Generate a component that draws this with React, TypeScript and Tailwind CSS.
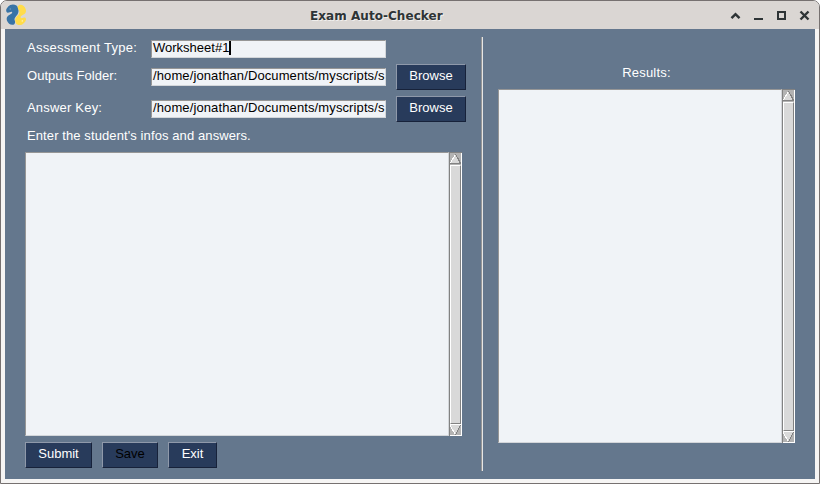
import React from "react";

const FONT = "font-['Liberation_Sans',Arial,sans-serif]";

function Label({ children, className = "" }: { children: React.ReactNode; className?: string }) {
  return <span className={`block whitespace-pre text-[13px] leading-[16px] text-white ${className}`}>{children}</span>;
}

function Field({ children, className = "" }: { children: React.ReactNode; className?: string }) {
  return (
    <div className={`flex h-[18px] w-[235px] shrink-0 overflow-hidden border border-b-[#d3d6da] border-l-[#969696] border-r-[#d3d6da] border-t-[#969696] bg-[#f0f3f7] pl-px text-[13px] leading-[14px] whitespace-pre text-black ${className}`}>
      {children}
    </div>
  );
}

function Button({ children, className = "" }: { children: React.ReactNode; className?: string }) {
  return (
    <button className={`flex h-[26px] shrink-0 justify-center border border-b-[#17223a] border-l-[#8f99aa] border-r-[#17223a] border-t-[#8f99aa] bg-[#283b5b] pt-[3px] text-[13px] leading-[16px] ${className}`}>
      {children}
    </button>
  );
}

function ScrollArrow({ down = false }: { down?: boolean }) {
  return (
    <svg width="12" height="12" viewBox="0 0 12 12" shapeRendering="crispEdges" className="block shrink-0">
      <rect width="12" height="12" fill="#b3b3b3" />
      {down ? (
        <>
          <path d="M0 1H11L5.5 11Z" fill="#d9d9d9" />
          <path d="M0 1L5.5 11M0 .5H11" stroke="#fff" fill="none" />
          <path d="M10.5 1L5.5 11" stroke="#828282" strokeWidth="1.3" />
          <path d="M0 11.5H12" stroke="#fff" />
        </>
      ) : (
        <>
          <path d="M5.5 1L11 11H0Z" fill="#d9d9d9" />
          <path d="M5.5 1L0 11" stroke="#fff" />
          <path d="M5.5 1L10.5 10.5H0" stroke="#828282" fill="none" strokeWidth="1.2" />
        </>
      )}
      <path d="M11.5 0V12" stroke="#fff" />
    </svg>
  );
}

function TextPanel({ className = "" }: { className?: string }) {
  return (
    <div className={`flex ${className}`}>
      <div className="grow border border-b-[#d3d6da] border-l-[#969696] border-r-[#d3d6da] border-t-[#969696] bg-[#f0f3f7]" />
      <div className="flex w-[13px] shrink-0 flex-col border-l border-t border-[#828282] bg-[#b3b3b3]">
        <ScrollArrow />
        <div className="flex grow border-r border-white">
          <div className="grow border border-b-[#828282] border-l-white border-r-[#828282] border-t-white bg-[#d9d9d9]" />
        </div>
        <ScrollArrow down />
      </div>
    </div>
  );
}

function PythonLogo() {
  return (
    <svg width="22" height="22" viewBox="0 0 22 22" className="block">
      <path d="M11.4 1.6C9 -.1 5 .4 3.2 2.6L1.4 5C.8 7 1.4 8.5 2.8 8.8C4.4 8.9 5.8 7.3 7 8C7.8 8.8 6.4 9.9 4.3 10.9C1.8 12.1 1.2 14.3 2 16.8C3 19.5 5.6 21.3 8.2 20.7C10.2 20.2 10.4 18.2 9.6 16.1C9.1 14.1 10.7 12.9 12.1 11.1C14 8.8 14.2 3.7 11.4 1.6Z" fill="#3974a6" />
      <path d="M13.8 1.2C16.8 0 19.6 2.2 20.6 5C21.7 8 20.3 9.8 17.7 11.1C15.8 12.1 15 13.3 16 14C17.3 14.7 19.2 12.7 20.6 14C21.9 15.7 20 18.6 17.6 20.2C15.2 21.7 11.8 21.2 10.8 19C9.6 16.5 9.9 14.3 12.2 12.1C14.4 10 15.2 8.4 13.8 6.2C12.6 4.3 12 2.1 13.8 1.2Z" fill="#ffdc4a" />
      <circle cx="5.2" cy="5" r=".7" fill="#7fa6c6" />
      <circle cx="17.3" cy="16.9" r=".7" fill="#fff6cf" />
    </svg>
  );
}

function WindowControls() {
  return (
    <svg width="82" height="12" viewBox="0 0 82 12" fill="none" stroke="#2e3436" className="block">
      <path d="M1.5 8.2L5.5 4.2L9.5 8.2" strokeWidth="2.5" />
      <path d="M24 9H33" strokeWidth="2" />
      <path d="M48 2H55V9H48Z" strokeWidth="2" />
      <path d="M70.5 1.5L78.5 9.5M78.5 1.5L70.5 9.5" strokeWidth="2.4" />
    </svg>
  );
}

export default function App() {
  return (
    <div className="h-[484px] w-[820px] overflow-hidden bg-white">
      <div className="flex h-full w-full flex-col overflow-hidden rounded-t-[7px] border border-[#767170] bg-[#f6f5f4]">
        <header className="grid h-[28px] shrink-0 grid-cols-[305px_1fr_auto] items-start bg-[#dad6d3] pl-[4px] pr-[7px]">
          <div className="pt-[3px]"><PythonLogo /></div>
          <h1 className="whitespace-nowrap pt-[7px] font-['DejaVu_Sans',sans-serif] text-[12px] font-bold leading-[16px] tracking-[0.05px] text-[#2e3436] [text-shadow:1px_1px_0_#f0eeec]">
            Exam Auto-Checker
          </h1>
          <div className="flex justify-end pt-[9px]"><WindowControls /></div>
        </header>

        <main className={`mx-[4px] flex h-[450px] shrink-0 bg-[#64778d] pl-[20px] pt-[8px] ${FONT}`}>
          <section className="w-[456px] shrink-0 pt-[3px]">
            <div className="flex h-[24px]">
              <Label className="w-[126px] shrink-0 pl-[2px] tracking-[0.26px]">Assessment Type:</Label>
              <Field><span>Worksheet#1</span><span className="h-[14px] w-[2px] bg-black" /></Field>
            </div>
            <div className="flex h-[32px]">
              <Label className="w-[126px] shrink-0 pl-[2px] pt-[4px] tracking-[0.04px]">Outputs Folder:</Label>
              <Field className="mt-[4px] tracking-[0.11px]">/home/jonathan/Documents/myscripts/s</Field>
              <Button className="ml-[10px] w-[70px] text-white">Browse</Button>
            </div>
            <div className="flex h-[32px]">
              <Label className="w-[126px] shrink-0 pl-[2px] pt-[4px] tracking-[0.2px]">Answer Key:</Label>
              <Field className="mt-[4px] tracking-[0.11px]">/home/jonathan/Documents/myscripts/s</Field>
              <Button className="ml-[10px] w-[70px] text-white">Browse</Button>
            </div>
            <Label className="h-[24px] pl-[2px] tracking-[0.1px]">Enter the student's infos and answers.</Label>
            <TextPanel className="h-[284px] w-[437px]" />
            <div className="mt-[6px] flex gap-[10px]">
              <Button className="w-[67px] text-white">Submit</Button>
              <Button className="w-[56px] text-black">Save</Button>
              <Button className="w-[49px] text-white">Exit</Button>
            </div>
          </section>
          <div className="h-[434px] w-[2px] shrink-0 border-l border-r border-l-[#969696] border-r-[#e6e6e6]" />
          <section className="ml-[15px] w-[297px] pt-[28px]">
            <Label className="h-[24px] text-center tracking-[0.2px]">Results:</Label>
            <TextPanel className="h-[354px]" />
          </section>
        </main>
      </div>
    </div>
  );
}
